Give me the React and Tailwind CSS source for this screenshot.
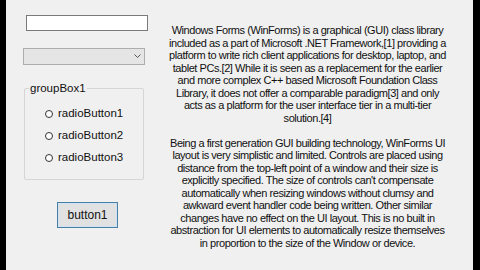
import React from "react";

const p1 = [
  "Windows Forms (WinForms) is a graphical (GUI) class library",
  "included as a part of Microsoft .NET Framework,[1] providing a",
  "platform to write rich client applications for desktop, laptop, and",
  "tablet PCs.[2] While it is seen as a replacement for the earlier",
  "and more complex C++ based Microsoft Foundation Class",
  "Library, it does not offer a comparable paradigm[3] and only",
  "acts as a platform for the user interface tier in a multi-tier",
  "solution.[4]",
];
const p2 = [
  "Being a first generation GUI building technology, WinForms UI",
  "layout is very simplistic and limited. Controls are placed using",
  "distance from the top-left point of a window and their size is",
  "explicitly specified. The size of controls can't compensate",
  "automatically when resizing windows without clumsy and",
  "awkward event handler code being written. Other similar",
  "changes have no effect on the UI layout. This is no built in",
  "abstraction for UI elements to automatically resize themselves",
  "in proportion to the size of the Window or device.",
];

function Radio({ label }) {
  return (
    <div className="flex items-center gap-[5px] h-[12px]">
      <div className="w-[8px] h-[8px] rounded-full border border-[#333] bg-white" />
      <span>{label}</span>
    </div>
  );
}

export default function App() {
  return (
    <div
      className="w-[480px] h-[270px] flex bg-black text-[#111]"
      style={{ fontFamily: '"Liberation Sans", Arial, sans-serif' }}
    >
      <div className="w-[6px]" />
      <div className="flex-1 bg-[#f0f0f0] flex">
        <div className="w-[150px] flex flex-col text-[11px]">
          <div className="ml-[20px] mt-[15px] w-[122px] h-[16px] bg-white border border-[#7a7a7a]" />
          <div className="ml-[17px] mt-[17px] w-[122px] h-[17px] bg-[#e5e5e5] border border-[#adadad] flex items-center justify-end pr-[3px]">
            <svg width="7" height="5" viewBox="0 0 7 5">
              <path d="M0.5 0.5 L3.5 3.5 L6.5 0.5" stroke="#555" fill="none" strokeWidth="1" />
            </svg>
          </div>
          <div className="ml-[18px] mt-[23px] w-[120px] h-[92px] border border-[#d5d5d5] rounded-[2px] relative">
            <span className="absolute left-[4px] top-[-8px] bg-[#f0f0f0] px-[1px] leading-[14px] text-[11.5px]">
              groupBox1
            </span>
            <div className="mt-[19px] ml-[20px] flex flex-col gap-[10px] text-[11.5px]">
              <Radio label="radioButton1" />
              <Radio label="radioButton2" />
              <Radio label="radioButton3" />
            </div>
          </div>
          <div className="ml-[51px] mt-[22px] w-[61px] h-[26px] border border-[#4a7fa5] bg-[#e1e1e1] shadow-[inset_0_0_0_1px_#cfe3f3] flex items-center justify-center text-[12px]">
            button1
          </div>
        </div>
        <div className="flex-1 pt-[24px] pl-[12px] pr-[26px] text-center text-[11px] leading-[12.5px] tracking-[-0.45px]">
          {p1.map((l) => (
            <div key={l} className="whitespace-nowrap">{l}</div>
          ))}
          <div className="h-[12.5px]" />
          {p2.map((l) => (
            <div key={l} className="whitespace-nowrap">{l}</div>
          ))}
        </div>
      </div>
      <div className="w-[7px]" />
    </div>
  );
}
